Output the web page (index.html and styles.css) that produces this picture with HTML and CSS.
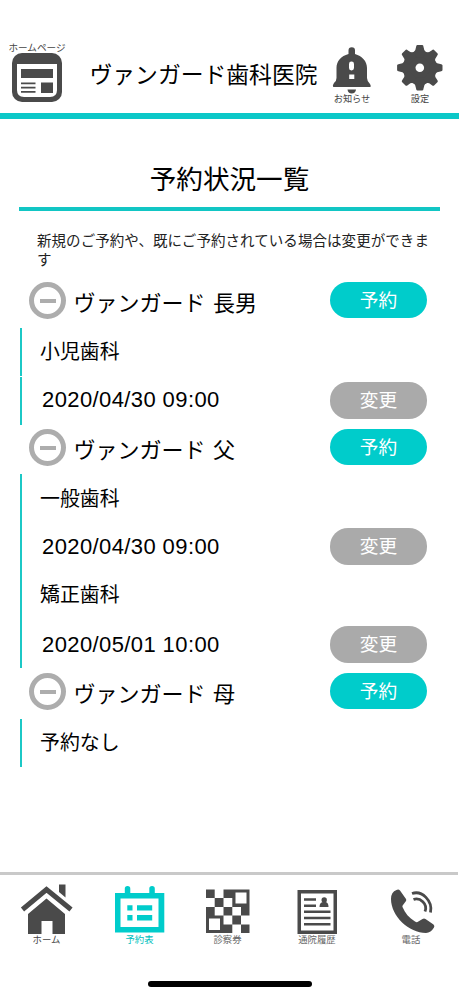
FILE: index.html
```html
<!DOCTYPE html>
<html lang="ja">
<head>
<meta charset="utf-8">
<title>予約状況一覧</title>
<link rel="stylesheet" href="styles.css">
</head>
<body>
<div class="app">
  <header class="topbar">
    <a class="top-item home-link">
      <span class="caption">ホームページ</span>
      <svg width="50" height="49" viewBox="12 53 50 49"><rect x="12" y="53" width="50" height="49" rx="10" fill="#4a4a4a"/><path d="M17 64H57V90Q57 97 50 97H24Q17 97 17 90Z" fill="#fff"/><path d="M21 69H53V78H21ZM41 82.500H53V93H41ZM21 82.500H35.500V84.200H21ZM21 86.800H35.500V88.500H21ZM21 91.100H35.500V92.800H21Z" fill="#4a4a4a"/></svg>
    </a>
    <h1 class="clinic">ヴァンガード歯科医院</h1>
    <a class="top-item bell-link">
      <svg width="40" height="48" viewBox="332 46 40 48" fill="#4a4a4a"><path d="M348.500 54V50.500A3.200 3.200 0 0 1 355 50.500V54C362 56 367 61 367 68V78Q367 81 370 84Q371.500 87 370 87H333.500Q332 86 334 83Q336.500 81 336.500 78V68C336.500 61 341 56 348.500 54Z"/><path d="M347.500 89.500H356Q355.500 93.500 351.700 93.500Q348 93.500 347.500 89.500Z"/><rect x="349" y="61.500" width="5" height="9" rx="2.400" fill="#fff"/><path d="M349.200 74.500H354.300V79H349.200Z" fill="#fff"/></svg>
      <span class="caption">お知らせ</span>
    </a>
    <a class="top-item gear-link">
      <svg width="46" height="48" viewBox="397 44 46 48"><g transform="translate(419.800 67.700)" fill="#4a4a4a"><circle r="17"/><g id="teeth"><path id="tooth" d="M-6.500 -15Q-4 -17 -3.800 -20.500Q-3.600 -22.700 -2.500 -22.700H2.500Q3.600 -22.700 3.800 -20.500Q4 -17 6.500 -15L5 -10H-5Z"/><use href="#tooth" transform="rotate(90)"/><use href="#tooth" transform="rotate(180)"/><use href="#tooth" transform="rotate(270)"/></g><use href="#teeth" transform="rotate(45)"/><circle r="4.300" fill="#fff"/></g></svg>
      <span class="caption">設定</span>
    </a>
  </header>

  <main class="content">
    <h2 class="page-title">予約状況一覧</h2>
    <p class="lead">新規のご予約や、既にご予約されている場合は変更ができます</p>

    <section class="member first">
      <div class="member-head">
        <span class="collapse"></span><span class="name">ヴァンガード 長男</span><button class="btn">予約</button>
      </div>
      <div class="visits split">
        <div class="row service">小児歯科</div>
        <div class="row"><span class="date">2020/04/30 09:00</span><button class="btn change">変更</button></div>
      </div>
    </section>
    <section class="member">
      <div class="member-head">
        <span class="collapse"></span><span class="name">ヴァンガード 父</span><button class="btn">予約</button>
      </div>
      <div class="visits">
        <div class="row service">一般歯科</div>
        <div class="row"><span class="date">2020/04/30 09:00</span><button class="btn change">変更</button></div>
        <div class="row service next">矯正歯科</div>
        <div class="row"><span class="date">2020/05/01 10:00</span><button class="btn change">変更</button></div>
      </div>
    </section>
    <section class="member last">
      <div class="member-head">
        <span class="collapse"></span><span class="name">ヴァンガード 母</span><button class="btn">予約</button>
      </div>
      <div class="visits">
        <div class="row service">予約なし</div>
      </div>
    </section>
  </main>

  <nav class="tabs">
    <a class="tab">
      <svg width="93" height="55" viewBox="0 880 93 55"><path d="M28 934V914L46.500 898.500L65 914V934H52.500V921H41.500V934ZM59 884.500H65.500V897.500L59 892Z" fill="#4a4a4a"/><path d="M22.500 909.500L46.500 889.500L71 909.500" fill="none" stroke="#4a4a4a" stroke-width="5"/></svg>
      <span class="caption">ホーム</span>
    </a>
    <a class="tab active">
      <svg width="93" height="55" viewBox="93 880 93 55" fill="#00cccb"><path fill-rule="evenodd" d="M115 893H164.300V932.500H115ZM120.500 898.500V927H158.500V898.500Z"/><rect x="124.800" y="886" width="5.500" height="12" rx="2.700"/><rect x="149.300" y="886" width="5.500" height="12" rx="2.700"/><path d="M127.300 905.200H132.500V910.500H127.300ZM137 905.200H152.200V910.500H137ZM127.300 915H132.500V920.500H127.300ZM137 915H152.200V920.500H137Z"/></svg>
      <span class="caption">予約表</span>
    </a>
    <a class="tab">
      <svg width="83" height="55" viewBox="186 880 83 55" fill="#4a4a4a"><path d="M206 889.500H214.700V898H206ZM223.500 889.500H249.500V915.500H241V907H232.300V898H223.500ZM214.700 898H223.500V907H214.700ZM223.500 907H232.300V915.500H223.500ZM206 907H214.700V915.500H223.500V924.500H232.300V933H206ZM232.300 915.500H241V924.500H232.300ZM241 924.500H249.500V933H241Z"/><path d="M235.500 892.500H246.500V903.500H235.500ZM209 918.500H220V930H209Z" fill="#fff"/></svg>
      <span class="caption light">診察券</span>
    </a>
    <a class="tab">
      <svg width="96" height="55" viewBox="269 880 96 55" fill="#4a4a4a"><path fill-rule="evenodd" d="M297.500 890H337V934H297.500ZM301 893.500V930.500H333.500V893.500Z"/><path d="M304 898.200H316V900.800H304ZM304 904.400H316V907H304ZM304 910.600H330.500V913H304ZM304 916.700H330.500V919.200H304ZM304 923H330.500V925.500H304ZM319.500 907Q319.500 902.500 323 902H325.500Q328.500 902.500 328.500 907Z"/><circle cx="324.200" cy="900" r="2.700"/></svg>
      <span class="caption light">通院履歴</span>
    </a>
    <a class="tab">
      <svg width="92" height="55" viewBox="365 880 92 55"><path d="M396.500 890Q391 892 391 899C391 916 409 933 426 933Q431 932.500 434 927.500Q435 926 433.500 924.500L425.500 919Q424 918 422.500 919L417.500 922Q416.500 922.500 415 921.500C409 918 405 913 402.500 907Q402 906 403 905L406 901Q406.500 900 406 899L400 890.500Q398.500 889 396.500 890Z" fill="#4a4a4a"/><path d="M412 893.500C422 890 433 901 430.500 912.500M413.500 899.500C420 897 428 904 425 911.500" fill="none" stroke="#4a4a4a" stroke-width="2.800"/></svg>
      <span class="caption light">電話</span>
    </a>
  </nav>
  <div class="home-indicator"></div>
</div>
</body>
</html>
```
FILE: styles.css
```css
* { box-sizing: border-box; }
body {
  margin: 0;
  background: #fff;
  color: #000;
  font-family: "Noto Sans CJK JP", sans-serif;
}
.app {
  display: flex;
  flex-direction: column;
  width: 460px;
  height: 996px;
  overflow: hidden;
}
svg { display: block; flex: none; }
.caption {
  font-size: 9.4px;
  line-height: 10px;
  color: #444;
  white-space: nowrap;
}

.topbar {
  display: flex;
  align-items: flex-start;
  width: 459px;
  height: 119px;
  padding-top: 42px;
  border-bottom: 6px solid #0cc8c8;
  flex: none;
}
.top-item { display: flex; flex-direction: column; align-items: center; flex: none; }
.home-link { width: 58px; margin-left: 8px; }
.home-link .caption { font-size: 9.6px; line-height: 11px; }
.clinic {
  width: 228px;
  margin: 15px 0 0 23.5px;
  font-size: 22.8px;
  line-height: 34px;
  font-weight: 400;
  white-space: nowrap;
}
.bell-link { width: 40px; margin: 4px 0 0 14.5px; }
.gear-link { width: 46px; margin: 2px 0 0 25px; }
.bell-link .caption { margin-top: -1px; font-size: 9.2px; }
.gear-link .caption { margin-top: 1px; font-size: 9.2px; }

.content { flex: 1; padding-left: 19px; }
.page-title {
  width: 421px;
  height: 92px;
  margin: 0;
  padding-top: 39px;
  border-bottom: 4px solid #12c6c4;
  font-size: 26.6px;
  line-height: 40px;
  font-weight: 400;
  text-align: center;
}
.lead {
  width: 395px;
  height: 67px;
  margin: 0 0 0 18px;
  padding-top: 20px;
  font-size: 14.5px;
  line-height: 18.5px;
  letter-spacing: 0.06px;
  color: #222;
  word-break: break-all;
}
.member-head {
  display: flex;
  align-items: flex-start;
  height: 49px;
  padding: 4px 0 0 10px;
}
.first .member-head { height: 50px; }
.last .member-head { height: 51px; padding-top: 5px; }
.collapse {
  display: flex;
  align-items: center;
  justify-content: center;
  width: 37px;
  height: 37px;
  border: 5px solid #adadad;
  border-radius: 50%;
}
.collapse::before {
  content: "";
  width: 16px;
  height: 4px;
  background: #adadad;
}
.name {
  width: 256.5px;
  margin: 3px 0 0 7.5px;
  font-size: 22px;
  line-height: 32px;
  word-spacing: 2.5px;
  white-space: nowrap;
}
.btn {
  width: 97px;
  height: 36px;
  padding: 0 0 2px;
  border: 0;
  border-radius: 18px;
  background: #00cccb;
  color: #fff;
  font: 18.700px/34px "Noto Sans CJK JP", sans-serif;
}
.change { background: #aaa; margin-top: -1px; height: 37px; padding-bottom: 3px; }
.visits {
  margin-left: 1px;
  border-left: 2px solid #1cc8c6;
}
.row {
  display: flex;
  align-items: center;
  height: 48.500px;
  padding-left: 19px;
}
.last .row { height: 47.500px; }
.split { border-left: 0; }
.split .row { border-left: 2px solid #1cc8c6; }
.split .service { height: 48px; margin-bottom: 1px; padding-bottom: 2px; }
.split .service + .row { height: 48px; }
.service { padding: 0 0 1px 18px; font-size: 19.900px; line-height: 30px; }
.next { padding-bottom: 3px; }
.next + .row { padding-top: 2px; }
.date {
  width: 289px;
  padding-left: 1px;
  font: 22px/30px "Liberation Sans", Arial, sans-serif;
  letter-spacing: 0.400px;
  white-space: nowrap;
}
.split .date { padding-bottom: 2px; }

.tabs {
  display: grid;
  grid-template-columns: 93px 93px 83px 96px 92px;
  width: 458px;
  height: 109px;
  padding-top: 5px;
  border-top: 3px solid #c9c9c9;
  flex: none;
}
.tab { display: flex; flex-direction: column; align-items: center; }
.tab .caption { margin-top: -1px; }
.active .caption { color: #00bfbe; }
.tab .light { color: #666; }
.home-indicator {
  width: 164px;
  height: 6px;
  margin: 0 0 9px 148px;
  border-radius: 3px;
  background: #000;
  flex: none;
}
```
